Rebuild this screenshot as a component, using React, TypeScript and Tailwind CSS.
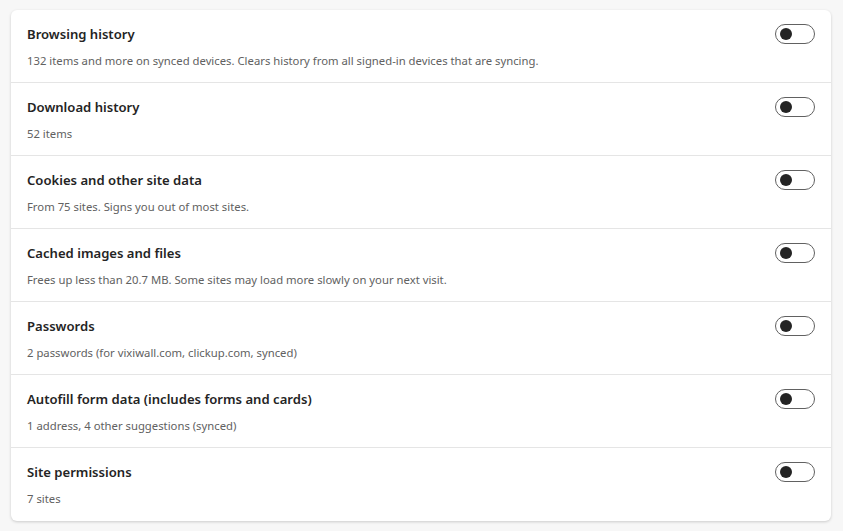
import React from "react";

type Item = { title: string; desc: string };

const items: Item[] = [
  { title: "Browsing history", desc: "132 items and more on synced devices. Clears history from all signed-in devices that are syncing." },
  { title: "Download history", desc: "52 items" },
  { title: "Cookies and other site data", desc: "From 75 sites. Signs you out of most sites." },
  { title: "Cached images and files", desc: "Frees up less than 20.7 MB. Some sites may load more slowly on your next visit." },
  { title: "Passwords", desc: "2 passwords (for vixiwall.com, clickup.com, synced)" },
  { title: "Autofill form data (includes forms and cards)", desc: "1 address, 4 other suggestions (synced)" },
  { title: "Site permissions", desc: "7 sites" },
];

function Toggle() {
  return (
    <div className="w-[40px] h-[20px] rounded-full border border-[#616161] flex items-center px-[4px] shrink-0">
      <div className="w-[12px] h-[12px] rounded-full bg-[#242424]" />
    </div>
  );
}

export default function App() {
  return (
    <div
      className="min-h-[531px] bg-[#f7f7f7] pt-[10px] pl-[11px] pr-[12px]"
      style={{ fontFamily: '"Segoe UI", "Noto Sans", "Open Sans", sans-serif' }}
    >
      <div className="bg-white rounded-[6px] shadow-[0_1px_3px_rgba(0,0,0,0.18)]">
        {items.map((it, i) => (
          <div
            key={it.title}
            className={`h-[73px] px-[16px] pt-[14px] ${i < items.length - 1 ? "border-b border-[#e5e5e5]" : ""}`}
          >
            <div className="flex items-center justify-between">
              <div className="text-[13.1px] leading-[20px] font-semibold text-[#242424]">{it.title}</div>
              <Toggle />
            </div>
            <div className="mt-[9px] text-[11.3px] leading-[16px] text-[#616161]">{it.desc}</div>
          </div>
        ))}
      </div>
    </div>
  );
}
